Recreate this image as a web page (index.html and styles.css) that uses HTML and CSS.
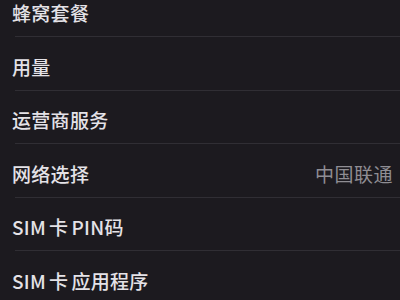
FILE: index.html
```html
<!DOCTYPE html>
<html lang="zh">
<head>
<meta charset="utf-8">
<link rel="stylesheet" href="styles.css">
</head>
<body>
<div class="list">
  <div class="row"><div class="cell"><span class="label">蜂窝套餐</span></div></div>
  <div class="row"><div class="cell"><span class="label">用量</span></div></div>
  <div class="row"><div class="cell"><span class="label">运营商服务</span></div></div>
  <div class="row"><div class="cell"><span class="label">网络选择</span><span class="value">中国联通</span></div></div>
  <div class="row"><div class="cell"><span class="label">SIM<span class="sp">卡</span>PIN码</span></div></div>
  <div class="row"><div class="cell last"><span class="label">SIM<span class="sp">卡</span>应用程序</span></div></div>
</div>
</body>
</html>
```
FILE: styles.css
```css
html, body {
  margin: 0;
  padding: 0;
  background: #1c1a1f;
  overflow: hidden;
}
body {
  width: 400px;
  height: 300px;
  font-family: "Noto Sans CJK SC", "Noto Sans", sans-serif;
}
.list {
  margin-top: -16.5px;
}
.row {
  padding-left: 15px;
}
.cell {
  border-bottom: 1px solid #302e34;
  display: flex;
  align-items: center;
  justify-content: space-between;
  padding-right: 7px;
  padding-top: 6px;
  box-sizing: border-box;
  height: 53.5px;
}
.cell.last {
  border-bottom: none;
}
.label {
  margin-left: -3px;
  color: #e4e2e7;
  font-size: 19px;
  font-weight: 500;
  letter-spacing: 0.3px;
}
.sp {
  margin: 0 3px;
}
.value {
  color: #8f8d93;
  font-size: 19px;
  letter-spacing: 0.5px;
}
```
